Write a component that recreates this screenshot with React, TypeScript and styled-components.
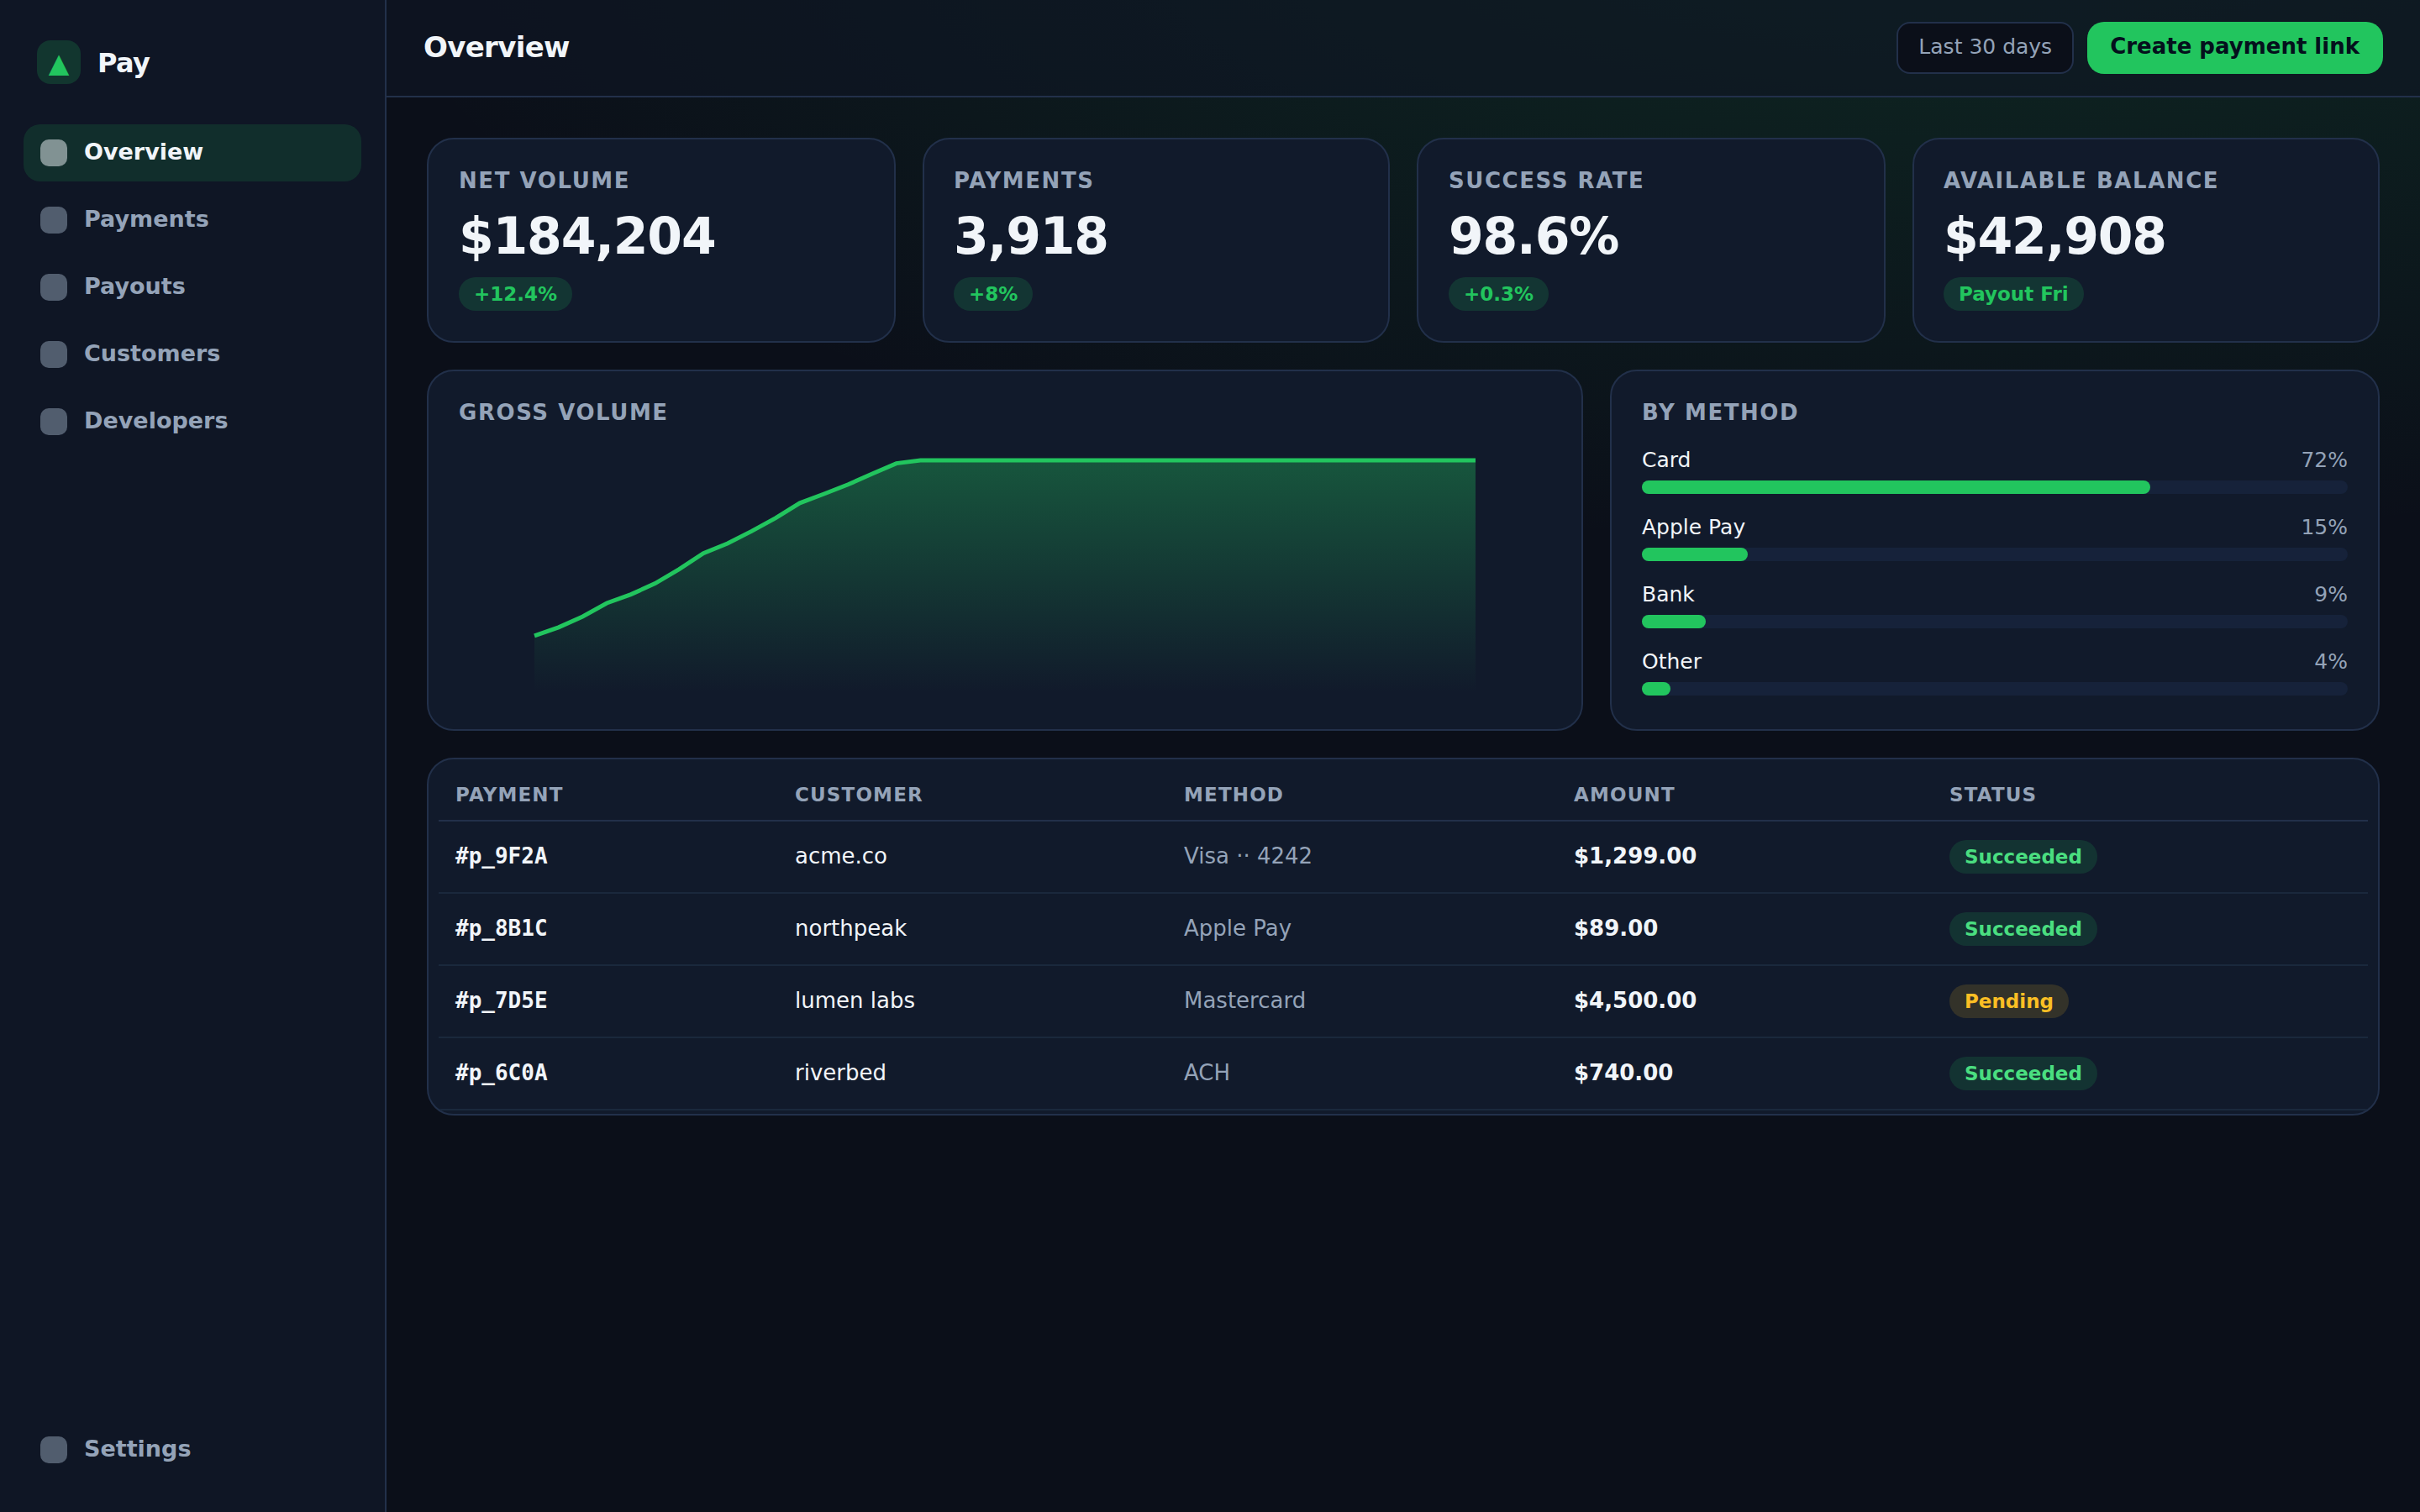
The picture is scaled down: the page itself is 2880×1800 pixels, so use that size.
import styled, { createGlobalStyle } from 'styled-components';

type Tone = 'accent' | 'success' | 'warning';

const GlobalStyle = createGlobalStyle`
  * {
    box-sizing: border-box;
  }

  body {
    margin: 0;
    color: #f1f5f9;
    font-family: 'DejaVu Sans', sans-serif;
    font-size: 26px;
    background: radial-gradient(3200px 1400px at 80% -10%, rgba(34, 197, 94, 0.15), transparent 60%) #0b0f19;
  }
`;

const Layout = styled.div`
  display: grid;
  grid-template-columns: 460px 1fr;
  height: 1800px;
`;

const Sidebar = styled.aside`
  display: flex;
  flex-direction: column;
  padding: 48px 28px 40px;
  background: #0f1625;
  border-right: 2px solid #22304a;
`;

const Brand = styled.div`
  display: flex;
  align-items: center;
  gap: 20px;
  padding: 0 16px;
  margin-bottom: 48px;
  font-size: 32px;
  font-weight: 700;
  letter-spacing: -0.02em;

  .name {
    padding-top: 2px;
  }
`;

const Logo = styled.span`
  display: grid;
  place-items: center;
  width: 52px;
  height: 52px;
  padding-top: 2px;
  border-radius: 16px;
  color: #22c55e;
  background: rgba(34, 197, 94, 0.18);
  letter-spacing: 0;
`;

const Nav = styled.nav`
  display: flex;
  flex: 1;
  flex-direction: column;
  gap: 12px;
`;

const NavItem = styled.a<{ $active?: boolean }>`
  display: flex;
  align-items: center;
  gap: 20px;
  height: 68px;
  padding: 0 20px;
  border-radius: 20px;
  font-size: 27px;
  font-weight: 600;
  color: ${({ $active }) => ($active ? '#f1f5f9' : '#94a3b8')};
  background: ${({ $active }) => ($active ? 'rgba(34, 197, 94, 0.14)' : 'transparent')};

  .label {
    padding-bottom: 3px;
  }
`;

const NavIcon = styled.span`
  width: 32px;
  height: 32px;
  border-radius: 10px;
  background: currentColor;
  opacity: 0.5;
`;

const Main = styled.main`
  min-width: 0;
`;

const Topbar = styled.header`
  display: flex;
  align-items: center;
  justify-content: space-between;
  height: 116px;
  padding: 0 44px;
  background: rgba(15, 22, 37, 0.6);
  border-bottom: 2px solid #22304a;

  h1 {
    margin: 0;
    padding-bottom: 2px;
    font-size: 34px;
    letter-spacing: -0.02em;
  }
`;

const Actions = styled.div`
  display: flex;
  gap: 16px;
`;

const Button = styled.button<{ $primary?: boolean }>`
  height: 62px;
  padding: ${({ $primary }) => ($primary ? '0 28px 4px 27px' : '0 24px 4px')};
  border: ${({ $primary }) => ($primary ? 'none' : '2px solid #22304a')};
  border-radius: ${({ $primary }) => ($primary ? 20 : 16)}px;
  font-family: inherit;
  font-size: ${({ $primary }) => ($primary ? 26 : 25)}px;
  font-weight: ${({ $primary }) => ($primary ? 700 : 400)};
  color: ${({ $primary }) => ($primary ? '#04101c' : '#94a3b8')};
  background: ${({ $primary }) => ($primary ? '#22c55e' : '#0b0f19')};
`;

const Content = styled.div`
  display: grid;
  gap: 32px;
  padding: 48px;
`;

const StatGrid = styled.section`
  display: grid;
  grid-template-columns: 558px 556px 558px 556px;
  gap: 32px;
`;

const ChartGrid = styled.section`
  display: grid;
  grid-template-columns: 1376px 916px;
  gap: 32px;
  height: 430px;
`;

const Card = styled.div`
  padding: 36px;
  background: #111a2b;
  border: 2px solid #22304a;
  border-radius: 32px;
`;

const CardTitle = styled.h2`
  margin: 0;
  font-size: 26px;
  font-weight: 700;
  line-height: 26px;
  letter-spacing: 0.06em;
  text-transform: uppercase;
  color: #94a3b8;
`;

const StatValue = styled.div`
  margin: 20px 0 16px;
  font-size: 60px;
  font-weight: 700;
  line-height: 66px;
  letter-spacing: -0.02em;
`;

const tones: Record<Tone, { color: string; background: string }> = {
  accent: { color: '#22c55e', background: 'rgba(34, 197, 94, 0.16)' },
  success: { color: '#4ade80', background: 'rgba(34, 197, 94, 0.15)' },
  warning: { color: '#fbbf24', background: 'rgba(251, 191, 36, 0.15)' },
};

const Pill = styled.span<{ $tone: Tone }>`
  display: inline-block;
  padding: 6px 18px;
  border-radius: 20px;
  font-size: 23px;
  font-weight: 700;
  line-height: 28px;
  color: ${({ $tone }) => tones[$tone].color};
  background: ${({ $tone }) => tones[$tone].background};
`;

const StatCard = styled(Card)`
  height: 244px;

  &:nth-child(even) {
    padding-left: 35px;
  }

  ${Pill} {
    display: table;
  }
`;

const Chart = styled.svg`
  display: block;
  width: 100%;
  height: 320px;
  margin-top: 8px;
`;

const MethodList = styled.div`
  display: grid;
  gap: 24px;
  margin-top: 28px;
`;

const MethodRow = styled.div`
  .label {
    display: flex;
    justify-content: space-between;
    margin-bottom: 9px;
    font-size: 25px;
    line-height: 31px;
  }

  .share {
    color: #94a3b8;
  }
`;

const Track = styled.div`
  height: 16px;
  border-radius: 8px;
  background: #16223a;
`;

const Fill = styled.div`
  height: 100%;
  border-radius: 8px;
  background: #22c55e;
`;

const TableCard = styled(Card)`
  padding: 12px 12px 4px;
  overflow: hidden;
`;

const Table = styled.table`
  width: 100%;
  table-layout: fixed;
  border-collapse: separate;
  border-spacing: 0;

  th,
  td {
    text-align: left;
    vertical-align: baseline;
  }

  th {
    padding: 16px 20px;
    border-bottom: 2px solid #22304a;
    font-size: 23px;
    font-weight: 700;
    line-height: 28px;
    letter-spacing: 0.05em;
    text-transform: uppercase;
    color: #94a3b8;
  }

  td {
    padding: 22px 20px;
    border-bottom: 2px solid #1a283c;
    line-height: 30px;
  }

  .id {
    font-family: 'DejaVu Sans Mono', monospace;
    font-weight: 700;
  }

  .method {
    color: #94a3b8;
  }

  .amount {
    font-weight: 700;
  }
`;

const navItems = ['Overview', 'Payments', 'Payouts', 'Customers', 'Developers'];

const stats = [
  { title: 'Net volume', value: '$184,204', note: '+12.4%' },
  { title: 'Payments', value: '3,918', note: '+8%' },
  { title: 'Success rate', value: '98.6%', note: '+0.3%' },
  { title: 'Available balance', value: '$42,908', note: 'Payout Fri' },
];

const methods = [
  { name: 'Card', share: 72 },
  { name: 'Apple Pay', share: 15 },
  { name: 'Bank', share: 9 },
  { name: 'Other', share: 4 },
];

const columns = [
  { name: 'Payment', width: 404 },
  { name: 'Customer', width: 463 },
  { name: 'Method', width: 464 },
  { name: 'Amount', width: 447 },
  { name: 'Status', width: 518 },
];

const payments = [
  { id: '#p_9F2A', customer: 'acme.co', method: 'Visa ·· 4242', amount: '$1,299.00', status: 'Succeeded' },
  { id: '#p_8B1C', customer: 'northpeak', method: 'Apple Pay', amount: '$89.00', status: 'Succeeded' },
  { id: '#p_7D5E', customer: 'lumen labs', method: 'Mastercard', amount: '$4,500.00', status: 'Pending' },
  { id: '#p_6C0A', customer: 'riverbed', method: 'ACH', amount: '$740.00', status: 'Succeeded' },
];

// the curve hits its ceiling after the first 16 of the 40 samples
const rising = [122.4, 117.4, 111, 103, 97.8, 91.3, 82.8, 73.3, 67.5, 60.2, 52.3, 43.4, 38, 32.4, 26, 19.8];
const samples = Array.from({ length: 40 }, (_, i) => rising[i] ?? 18);
const linePath = samples.map((y, i) => `${i ? 'L' : 'M'}${((i * 560) / 39).toFixed(2)} ${y}`).join(' ');

function VolumeChart() {
  return (
    <Chart viewBox="0 0 560 160">
      <defs>
        <linearGradient id="volume" x1="0" y1="0" x2="0" y2="1">
          <stop offset="0" stopColor="#22c55e" stopOpacity="0.35" />
          <stop offset="1" stopColor="#22c55e" stopOpacity="0" />
        </linearGradient>
      </defs>
      <path d={`${linePath} L560 156 L0 156 Z`} fill="url(#volume)" />
      <path d={linePath} fill="none" stroke="#22c55e" strokeWidth="2.5" />
    </Chart>
  );
}

function App() {
  return (
    <>
      <GlobalStyle />
      <Layout>
        <Sidebar>
          <Brand>
            <Logo>▲</Logo>
            <span className="name">Pay</span>
          </Brand>
          <Nav>
            {navItems.map((item) => (
              <NavItem key={item} $active={item === 'Overview'}>
                <NavIcon />
                <span className="label">{item}</span>
              </NavItem>
            ))}
          </Nav>
          <NavItem>
            <NavIcon />
            <span className="label">Settings</span>
          </NavItem>
        </Sidebar>
        <Main>
          <Topbar>
            <h1>Overview</h1>
            <Actions>
              <Button>Last 30 days</Button>
              <Button $primary>Create payment link</Button>
            </Actions>
          </Topbar>
          <Content>
            <StatGrid>
              {stats.map((stat) => (
                <StatCard key={stat.title}>
                  <CardTitle>{stat.title}</CardTitle>
                  <StatValue>{stat.value}</StatValue>
                  <Pill $tone="accent">{stat.note}</Pill>
                </StatCard>
              ))}
            </StatGrid>
            <ChartGrid>
              <Card>
                <CardTitle>Gross volume</CardTitle>
                <VolumeChart />
              </Card>
              <Card>
                <CardTitle>By method</CardTitle>
                <MethodList>
                  {methods.map(({ name, share }) => (
                    <MethodRow key={name}>
                      <div className="label">
                        <span>{name}</span>
                        <span className="share">{share}%</span>
                      </div>
                      <Track>
                        <Fill style={{ width: `${share}%` }} />
                      </Track>
                    </MethodRow>
                  ))}
                </MethodList>
              </Card>
            </ChartGrid>
            <TableCard>
              <Table>
                <colgroup>
                  {columns.map(({ name, width }) => (
                    <col key={name} width={width} />
                  ))}
                </colgroup>
                <thead>
                  <tr>
                    {columns.map(({ name }) => (
                      <th key={name}>{name}</th>
                    ))}
                  </tr>
                </thead>
                <tbody>
                  {payments.map(({ id, customer, method, amount, status }) => (
                    <tr key={id}>
                      <td className="id">{id}</td>
                      <td>{customer}</td>
                      <td className="method">{method}</td>
                      <td className="amount">{amount}</td>
                      <td>
                        <Pill $tone={status === 'Pending' ? 'warning' : 'success'}>{status}</Pill>
                      </td>
                    </tr>
                  ))}
                </tbody>
              </Table>
            </TableCard>
          </Content>
        </Main>
      </Layout>
    </>
  );
}

export default App;
